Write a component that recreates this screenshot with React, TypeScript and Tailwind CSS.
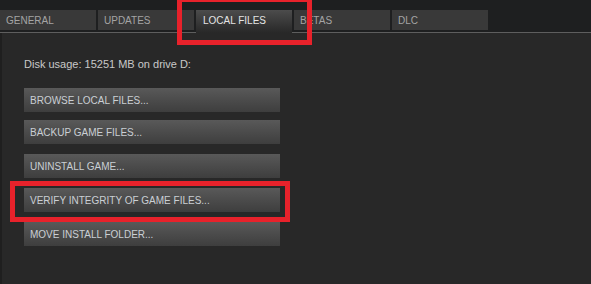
import React from "react";

const tabs = ["GENERAL", "UPDATES", "LOCAL FILES", "BETAS", "DLC"];
const buttons = [
  { label: "BROWSE LOCAL FILES...", mt: "mt-0" },
  { label: "BACKUP GAME FILES...", mt: "mt-[8px]" },
  { label: "UNINSTALL GAME...", mt: "mt-[10px]" },
  { label: "VERIFY INTEGRITY OF GAME FILES...", mt: "mt-[10px]" },
  { label: "MOVE INSTALL FOLDER...", mt: "mt-[10px]" },
];

export default function App() {
  return (
    <div
      className="relative w-[591px] h-[284px] overflow-hidden bg-[#282828] text-[#c8c8c8]"
      style={{ fontFamily: '"Liberation Sans", Arial, sans-serif' }}
    >
      <div className="bg-[#1e1f20] pt-[10px]">
        <div className="flex gap-[2px] h-[23px] border-b border-[#5e5e5e]">
          {tabs.map((t) =>
            t === "LOCAL FILES" ? (
              <div
                key={t}
                className="relative z-10 w-[96px] h-[23px] flex items-center pl-[7px] pb-[2px] text-[10px] text-[#e4e4e4] bg-gradient-to-b from-[#4c4c4c] to-[#282828]"
              >
                {t}
              </div>
            ) : (
              <div
                key={t}
                className="w-[96px] h-[20px] flex items-center pl-[6px] text-[10px] text-[#a4a4a4] bg-[#393939]"
              >
                {t}
              </div>
            )
          )}
        </div>
      </div>
      <div className="h-[251px] pl-[22px] border-l-2 border-[#1f1f1f]">
        <div className="pt-[25px] h-[55px] text-[11px] leading-[13px] text-[#c8c8c8]">
          Disk usage: 15251 MB on drive D:
        </div>
        <div className="flex flex-col">
          {buttons.map((b) => (
            <div
              key={b.label}
              className={`${b.mt} w-[256px] h-[24px] flex items-center pl-[6px] text-[10px] text-[#cacfd4] bg-gradient-to-b from-[#595959] to-[#3e3e3e]`}
            >
              {b.label}
            </div>
          ))}
        </div>
      </div>
      <div className="absolute left-[177px] top-[-3px] w-[135px] h-[48px] border-[5px] border-[#e8222b]" />
      <div className="absolute left-[10px] top-[181px] w-[280px] h-[41px] border-[5px] border-[#e8222b]" />
    </div>
  );
}
